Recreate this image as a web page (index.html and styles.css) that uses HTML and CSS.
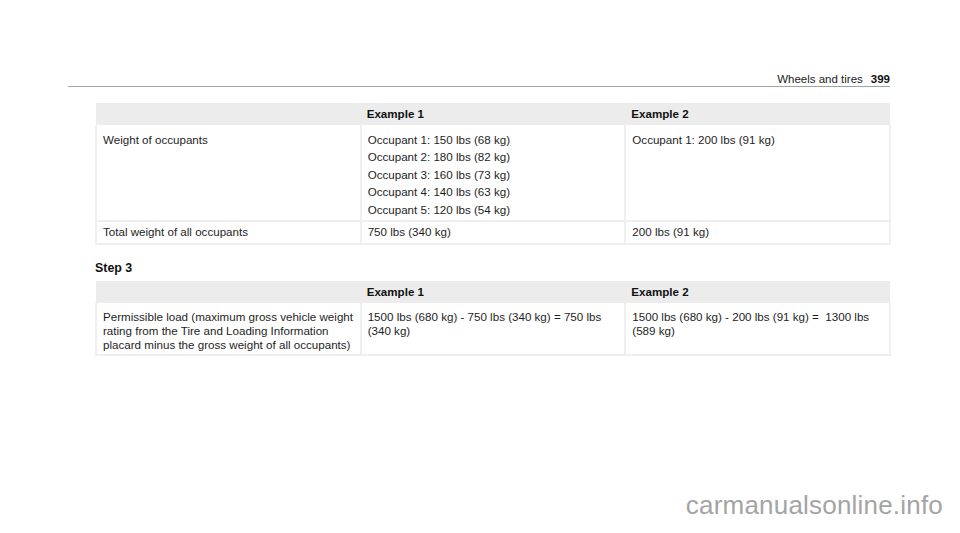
FILE: index.html
```html
<!DOCTYPE html>
<html>
<head>
<meta charset="utf-8">
<link rel="stylesheet" href="styles.css">
</head>
<body>
<div class="page">
  <header class="running-head">
    <span class="section">Wheels and tires</span>
    <span class="pageno">399</span>
  </header>
  <div class="content">
    <table class="data">
      <colgroup><col class="c1"><col class="c2"><col class="c3"></colgroup>
      <thead>
        <tr><th></th><th>Example 1</th><th>Example 2</th></tr>
      </thead>
      <tbody>
        <tr class="tall">
          <td>Weight of occupants</td>
          <td>
            <p>Occupant 1: 150 lbs (68 kg)</p>
            <p>Occupant 2: 180 lbs (82 kg)</p>
            <p>Occupant 3: 160 lbs (73 kg)</p>
            <p>Occupant 4: 140 lbs (63 kg)</p>
            <p>Occupant 5: 120 lbs (54 kg)</p>
          </td>
          <td><p>Occupant 1: 200 lbs (91 kg)</p></td>
        </tr>
        <tr class="short">
          <td>Total weight of all occupants</td>
          <td>750 lbs (340 kg)</td>
          <td>200 lbs (91 kg)</td>
        </tr>
      </tbody>
    </table>

    <h3 class="step">Step 3</h3>

    <table class="data">
      <colgroup><col class="c1"><col class="c2"><col class="c3"></colgroup>
      <thead>
        <tr><th></th><th>Example 1</th><th>Example 2</th></tr>
      </thead>
      <tbody>
        <tr class="tall2">
          <td>Permissible load (maximum gross vehicle weight rating from the Tire and Loading Information placard minus the gross weight of all occupants)</td>
          <td>1500 lbs (680 kg) - 750 lbs (340 kg) = 750 lbs (340&nbsp;kg)</td>
          <td>1500 lbs (680 kg) - 200 lbs (91 kg) =&nbsp; 1300 lbs (589&nbsp;kg)</td>
        </tr>
      </tbody>
    </table>
  </div>
</div>
<div class="watermark">carmanualsonline.info</div>
</body>
</html>
```

FILE: styles.css
```css
html, body {
  margin: 0;
  padding: 0;
  background: #ffffff;
}
body {
  width: 960px;
  height: 533px;
  overflow: hidden;
  font-family: "Liberation Sans", Arial, sans-serif;
  color: #1e1e1e;
}
.page {
  padding-top: 72px;
}
.running-head {
  margin-left: 68px;
  width: 822px;
  display: flex;
  justify-content: flex-end;
  align-items: baseline;
  gap: 8px;
  font-size: 11.5px;
  line-height: 14px;
  border-bottom: 1.5px solid #9aa5a4;
  color: #222;
}
.running-head .pageno {
  font-weight: bold;
  color: #111;
}
.content {
  margin-left: 95px;
  width: 796px;
  padding-top: 16px;
}
.data {
  width: 796px;
  border-collapse: collapse;
  table-layout: fixed;
  font-size: 11.6px;
  line-height: 14px;
}
.data .c1, .data .c2, .data .c3 {
  width: 33.333%;
}
.data th {
  background: #ebeceb;
  text-align: left;
  font-weight: bold;
  height: 22px;
  padding: 0 6px;
  border: none;
  color: #111;
}
.data td {
  vertical-align: top;
  padding: 4px 6px;
  border: 2px solid #efefef;
  border-top: none;
}
.data tr.tall td {
  padding: 8px 6px 3px;
}
.data tr.short td {
  padding: 3px 6px 4px;
}
.data tr.tall2 td {
  padding: 7px 6px 2px;
}
.data p {
  margin: 0 0 3.4px;
}
.data p:last-child {
  margin-bottom: 0;
}
.step {
  margin: 0;
  font-size: 12.4px;
  line-height: 14px;
  font-weight: bold;
  padding: 16px 0 6px;
  color: #111;
}
.watermark {
  position: absolute;
  right: 17px;
  top: 490px;
  font-family: "Liberation Sans", Arial, sans-serif;
  font-size: 26px;
  color: #a4a4a4;
  letter-spacing: 0.2px;
}
```
